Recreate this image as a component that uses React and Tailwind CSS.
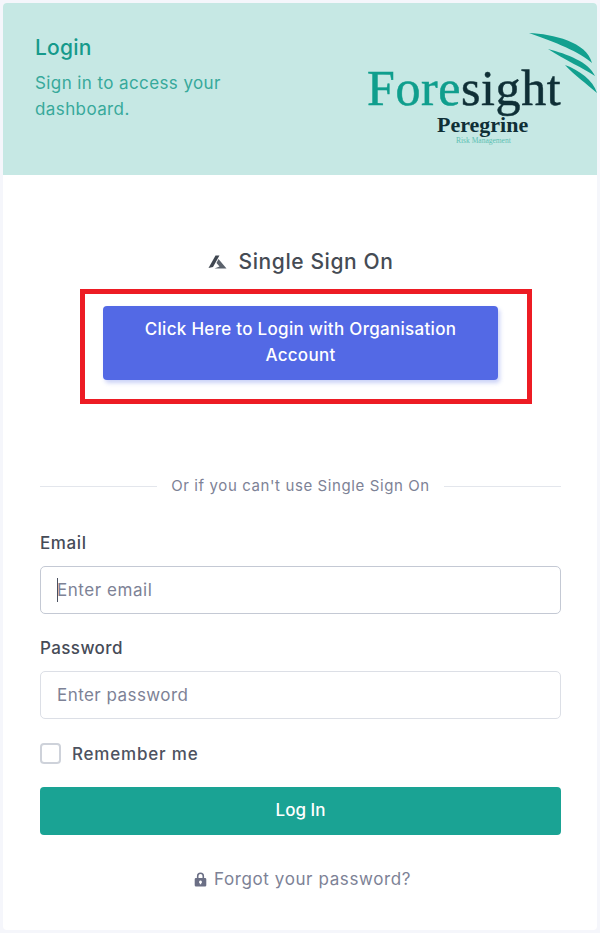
import React from 'react';

const AzureIcon = () => (
  <svg width="19" height="14" viewBox="0 0 19 14" className="shrink-0">
    <path d="M7.5 0.5 L11.5 0.5 L5 12 L0.5 13 Z" fill="#3f4650" />
    <path d="M10.5 4 L18.5 13.5 L6.5 13.5 L11.5 11.5 L8.5 8 Z" fill="#5b626c" />
  </svg>
);

const LockIcon = () => (
  <svg width="13" height="15" viewBox="0 0 13 15" className="shrink-0">
    <path
      d="M6.5 0.5a3.6 3.6 0 0 0-3.6 3.6V6H2a1.3 1.3 0 0 0-1.3 1.3v5.9A1.3 1.3 0 0 0 2 14.5h9a1.3 1.3 0 0 0 1.3-1.3V7.3A1.3 1.3 0 0 0 11 6h-.9V4.1A3.6 3.6 0 0 0 6.5 0.5zm0 1.6a2 2 0 0 1 2 2V6h-4V4.1a2 2 0 0 1 2-2zm0 6.4a1.5 1.5 0 0 1 .7 2.8v1h-1.4v-1a1.5 1.5 0 0 1 .7-2.8z"
      fill="#6b6f85"
      fillRule="evenodd"
    />
  </svg>
);

const Logo = () => (
  <div className="relative w-[232px] h-[172px] shrink-0">
    <svg width="72" height="70" viewBox="0 0 72 70" className="absolute left-[160px] top-[27px]">
      <path d="M4 3 C28 4 62 12 67 33 C55 22 30 12 4 3 Z" fill="#12a08f" />
      <path d="M23 19 C42 24 64 32 70 46 C58 38 40 30 23 19 Z" fill="#12a08f" />
      <path d="M40 35 C54 40 68 50 72 63 C62 54 50 46 40 35 Z" fill="#12a08f" />
    </svg>
    <div className="absolute left-[2px] top-[62px] font-['Liberation_Serif',serif] text-[50px] leading-[46px] tracking-[0.6px] [-webkit-text-stroke:0.5px] whitespace-nowrap">
      <span className="text-[#0f9e8d]">Fore</span>
      <span className="text-[#0f2f36]">sight</span>
    </div>
    <div className="absolute left-[72px] top-[111px] font-['Liberation_Serif',serif] font-bold text-[22px] leading-[22px] text-[#0f2f36] whitespace-nowrap">
      Peregrine
    </div>
    <div className="absolute left-[91px] top-[133px] font-['Liberation_Serif',serif] text-[7.5px] leading-[10px] text-[#5cc0b3] whitespace-nowrap">
      Risk Management
    </div>
  </div>
);

export default function App() {
  return (
    <div className="h-[933px] bg-[#f5f6fb] p-[3px] font-[Inter,sans-serif] overflow-hidden">
      <div className="h-[927px] bg-white rounded-[4px] overflow-hidden">
        {/* Header */}
        <div className="h-[172px] bg-[#c6e8e4] flex justify-between overflow-hidden">
          <div className="pl-[32px] pt-[32px]">
            <h1 className="text-[21px] leading-[26px] tracking-[0.2px] font-medium text-[#159a8b]">Login</h1>
            <p className="mt-[9px] w-[230px] text-[17px] leading-[26px] tracking-[0.4px] text-[#37a99b]">
              Sign in to access your dashboard.
            </p>
          </div>
          <Logo />
        </div>

        {/* Single sign on */}
        <div className="pl-[37px] pr-[36px]">
          <div className="mt-[73px] flex items-center justify-center gap-[12px]">
            <AzureIcon />
            <span className="text-[21px] leading-[28px] tracking-[0.6px] font-medium text-[#454b54]">Single Sign On</span>
          </div>
          <div className="mt-[13px] ml-[40px] w-[452px] border-[5px] border-[#ed1c24] pt-[12px] pb-[19px] pl-[18px] pr-[29px]">
            <button className="w-full h-[74px] rounded-[4px] bg-[#5369e5] shadow-[2px_3px_4px_rgba(83,105,229,0.3)] text-white text-[17px] leading-[26px] tracking-[0.3px] font-medium px-[30px] pb-[2px]">
              Click Here to Login with Organisation Account
            </button>
          </div>

          {/* Divider */}
          <div className="mt-[71px] flex items-center gap-[14px]">
            <div className="flex-1 h-[1px] bg-[#e3e6ec]" />
            <span className="text-[15px] leading-[22px] tracking-[0.6px] text-[#7d8296]">Or if you can't use Single Sign On</span>
            <div className="flex-1 h-[1px] bg-[#e3e6ec]" />
          </div>

          {/* Form */}
          <label className="block mt-[34px] text-[17px] leading-[24px] tracking-[0.6px] font-medium text-[#464b57]">Email</label>
          <div className="relative mt-[11px]">
            <input
              placeholder="Enter email"
              className="w-full h-[48px] rounded-[5px] border border-[#c4c9d4] px-[16px] text-[17px] tracking-[0.55px] bg-white placeholder:text-[#7d8296] outline-none"
            />
            <div className="absolute left-[17px] top-[12px] w-[1px] h-[24px] bg-[#4a5060]" />
          </div>
          <label className="block mt-[22px] text-[17px] leading-[24px] tracking-[0.4px] font-medium text-[#464b57]">Password</label>
          <input
            placeholder="Enter password"
            className="block mt-[11px] w-full h-[48px] rounded-[5px] border border-[#dcdfe6] px-[16px] text-[17px] tracking-[0.45px] bg-white placeholder:text-[#7d8296] outline-none"
          />
          <div className="mt-[23px] flex items-center gap-[11px]">
            <div className="w-[21px] h-[21px] rounded-[4px] border-2 border-[#ced2da] bg-white" />
            <span className="pt-[1px] text-[17px] leading-[22px] tracking-[0.8px] font-medium text-[#4d5260]">Remember me</span>
          </div>
          <button className="mt-[22px] w-full h-[48px] rounded-[4px] bg-[#1aa394] text-white text-[17px] font-medium">
            Log In
          </button>
          <div className="mt-[32px] pl-[4px] flex items-center justify-center gap-[7px]">
            <LockIcon />
            <span className="text-[17px] leading-[24px] tracking-[0.6px] text-[#7d8296]">Forgot your password?</span>
          </div>
        </div>
      </div>
    </div>
  );
}
